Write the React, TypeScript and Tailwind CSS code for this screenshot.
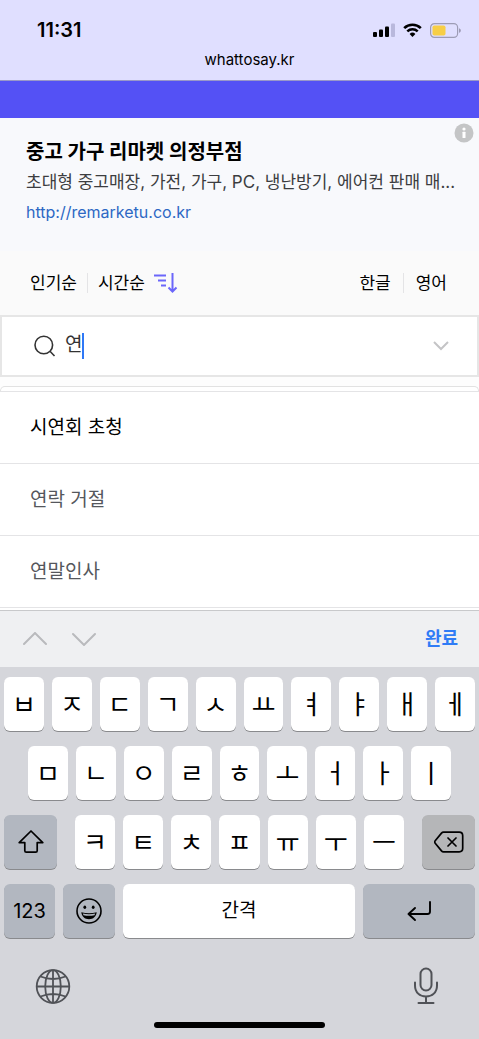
import { useState } from "react";
import type { ReactNode } from "react";
import clsx from "clsx";

const topRow = ["ㅂ", "ㅈ", "ㄷ", "ㄱ", "ㅅ", "ㅛ", "ㅕ", "ㅑ", "ㅐ", "ㅔ"];
const middleRow = ["ㅁ", "ㄴ", "ㅇ", "ㄹ", "ㅎ", "ㅗ", "ㅓ", "ㅏ", "ㅣ"];
const bottomRow = ["ㅋ", "ㅌ", "ㅊ", "ㅍ", "ㅠ", "ㅜ", "ㅡ"];

const suggestions = [
  { label: "시연회 초청", active: true },
  { label: "연락 거절", active: false },
  { label: "연말인사", active: false },
];

const keyTones = {
  light: "bg-white",
  dark: "bg-[#b2b7c0]",
  gray: "bg-[#b5b6b8]",
};

function StatusIcons() {
  return (
    <div className="flex items-center gap-2">
      <svg width="22" height="14" viewBox="0 0 22 14" aria-hidden="true">
        <rect x="0" y="9" width="4" height="5" rx="1" />
        <rect x="6" y="6.500" width="4" height="7.500" rx="1" />
        <rect x="12" y="3.500" width="4" height="10.500" rx="1" />
        <rect x="18" y="0.500" width="4" height="13.500" rx="1" fill="#b9b8dc" />
      </svg>
      <svg width="19" height="14" viewBox="0 0 19 14" aria-hidden="true">
        <path d="M1.200 5.100a12 12 0 0 1 16.600 0" fill="none" stroke="#000" strokeWidth="2.700" />
        <path d="M4.300 8.400a7.500 7.500 0 0 1 10.400 0" fill="none" stroke="#000" strokeWidth="2.500" />
        <path d="M6.600 10.900a4.300 4.300 0 0 1 5.800 0L9.500 14z" />
      </svg>
      <svg width="31" height="15" viewBox="0 0 31 15" aria-hidden="true">
        <rect x="0.600" y="0.600" width="27" height="13.800" rx="3.800" fill="none" stroke="#9d9cb5" strokeWidth="1.200" />
        <rect x="2.500" y="2.500" width="13" height="10" rx="1.800" fill="#f7ce46" />
        <path d="M29.200 5.200c2 .8 2 3.800 0 4.600z" fill="#8d8ca4" />
      </svg>
    </div>
  );
}

type KeyProps = {
  children: ReactNode;
  className?: string;
  tone?: keyof typeof keyTones;
  label?: string;
};

function Key({ children, className = "flex-1 text-[26px]", tone = "light", label }: KeyProps) {
  return (
    <button
      type="button"
      aria-label={label}
      className={clsx(
        "flex h-[54px] min-w-0 items-center justify-center rounded-md shadow-[0_1px_0_#898a8d]",
        keyTones[tone],
        className,
      )}
    >
      {children}
    </button>
  );
}

function Keyboard() {
  return (
    <section className="bg-[#d5d6db] pt-[10px]" aria-label="키보드">
      <div className="space-y-[15px] px-1">
        <div className="flex gap-2">
          {topRow.map((letter) => (
            <Key key={letter}>{letter}</Key>
          ))}
        </div>
        <div className="flex gap-2 px-6">
          {middleRow.map((letter) => (
            <Key key={letter}>{letter}</Key>
          ))}
        </div>
        <div className="flex justify-between gap-[18px]">
          <Key tone="dark" label="Shift" className="w-[53px]">
            <svg width="28" height="26" viewBox="0 0 28 26" fill="none" stroke="#000" strokeWidth="1.700" strokeLinejoin="round" aria-hidden="true">
              <path d="M14 2 2.200 13.600h5.600v8.100q0 1.500 1.500 1.500h9.400q1.500 0 1.500-1.500v-8.100h5.600z" />
            </svg>
          </Key>
          <div className="flex min-w-0 flex-1 gap-2">
            {bottomRow.map((letter) => (
              <Key key={letter}>{letter}</Key>
            ))}
          </div>
          <Key tone="gray" label="지우기" className="w-[53px]">
            <svg width="30" height="24" viewBox="0 0 30 24" fill="none" stroke="#000" strokeWidth="1.700" strokeLinecap="round" strokeLinejoin="round" aria-hidden="true">
              <path d="M9.500 2.200h15.700q3.500 0 3.500 3.500v12.600q0 3.500-3.500 3.500H9.500q-1.200 0-2-.9L1.200 13.200q-1-1.200 0-2.400l6.300-7.700q.8-.9 2-.9zM14 8l8 8M22 8l-8 8" />
            </svg>
          </Key>
        </div>
        <div className="flex gap-2">
          <Key tone="dark" className="w-[51px] text-xl">
            123
          </Key>
          <Key tone="dark" label="이모티콘" className="w-[52px]">
            <svg width="28" height="28" viewBox="0 0 28 28" aria-hidden="true">
              <circle cx="14" cy="14" r="12" fill="none" stroke="#000" strokeWidth="1.600" />
              <ellipse cx="9.800" cy="10.200" rx="1.400" ry="1.800" />
              <ellipse cx="18.200" cy="10.200" rx="1.400" ry="1.800" />
              <path d="M6.300 15.200q7.700 2 15.400 0c-.4 4.200-3.500 7-7.700 7s-7.300-2.800-7.700-7z" />
              <path d="M7.800 16.600q6.200 1.300 12.400 0l-.7 1.600q-5.500 1.300-11 0z" fill="#b2b7c0" />
            </svg>
          </Key>
          <Key className="flex-1 text-[19px]">간격</Key>
          <Key tone="dark" label="입력" className="w-[112px]">
            <svg width="26" height="22" viewBox="0 0 26 22" fill="none" stroke="#000" strokeWidth="1.900" strokeLinecap="round" strokeLinejoin="round" aria-hidden="true">
              <path d="M24 2v9.500q0 2.500-2.500 2.500H2.500M9 8l-6.500 6L9 20" />
            </svg>
          </Key>
        </div>
      </div>

      <div className="flex items-center justify-between pt-7 pr-8 pl-[35px] text-[#505257]">
        <button type="button" aria-label="언어 변경">
          <svg width="36" height="40" viewBox="0 0 36 40" fill="none" stroke="currentColor" strokeWidth="1.800" aria-hidden="true">
            <circle cx="18" cy="20.500" r="16.300" />
            <ellipse cx="18" cy="20.500" rx="7.800" ry="16.300" />
            <path d="M18 4v33M1.700 20.500h32.600M5.500 10.500q12.500 5 25 0M5.500 30.500q12.500-5 25 0" />
          </svg>
        </button>
        <button type="button" aria-label="받아쓰기">
          <svg width="42" height="40" viewBox="0 0 42 40" fill="none" stroke="currentColor" strokeWidth="2" strokeLinecap="round" aria-hidden="true">
            <rect x="15.500" y="2.500" width="11" height="22" rx="5.500" />
            <path d="M10 16.500v3c0 7 4.800 11 11 11s11-4 11-11v-3M21 30.500v6M13.500 37h15" />
          </svg>
        </button>
      </div>
      <div className="flex justify-center pt-4 pb-[11px]">
        <div className="h-[6px] w-[171px] rounded-full bg-black" />
      </div>
    </section>
  );
}

export default function App() {
  const [query, setQuery] = useState("연");

  return (
    <div className="min-h-screen w-full bg-[#d5d6db] font-['Inter','Noto_Sans_CJK_KR',sans-serif] text-black">
      <header className="border-b border-[#9998c9] bg-[#e0dfff]">
        <div className="flex h-[50px] items-center justify-between pt-[10px] pr-[18px] pl-[37px]">
          <time className="text-xl leading-6 font-semibold">11:31</time>
          <StatusIcons />
        </div>
        <p className="h-[30px] pl-5 text-center text-[15px] leading-5">whattosay.kr</p>
      </header>
      <div className="h-[37px] bg-[#5451f5]" />

      <main className="bg-white">
        <section className="relative h-[133px] bg-[#f8f9fc] pt-5 pr-4 pl-[26px]">
          <h1 className="text-xl leading-7 font-bold">중고 가구 리마켓 의정부점</h1>
          <p className="text-[17px] leading-8 whitespace-nowrap text-[#3c3d40]">
            초대형 중고매장, 가전, 가구, PC, 냉난방기, 에어컨 판매 매...
          </p>
          <a href="http://remarketu.co.kr" className="block text-base leading-7 text-[#2d68c4]">
            http://remarketu.co.kr
          </a>
          <button type="button" aria-label="광고 정보" className="absolute top-[5px] right-[5px]">
            <svg width="20" height="20" viewBox="0 0 20 20" aria-hidden="true">
              <circle cx="10" cy="10" r="9.500" fill="#c4c5c6" />
              <circle cx="10" cy="6" r="1.600" fill="#fff" />
              <rect x="8.500" y="8.700" width="3" height="6.300" rx="0.500" fill="#fff" />
            </svg>
          </button>
        </section>

        <div className="flex h-16 items-center justify-between bg-[#fafafa] pr-8 pl-[30px] text-[17px] leading-6">
          <div className="flex items-center">
            <button type="button" className="border-r border-[#e4e4e6] pr-[10px] leading-5">
              인기순
            </button>
            <button type="button" className="flex items-center gap-[9px] pl-[10px]">
              시간순
              <svg width="24" height="20" viewBox="0 0 24 20" fill="none" stroke="#6b66fa" strokeWidth="2" aria-hidden="true">
                <path d="M0 2.500h12M4 7.500h8M7 12.500h5" />
                <path d="M18.500 0v18.500M14.500 14.500l4 4 4-4" />
              </svg>
            </button>
          </div>
          <div className="flex items-center">
            <button type="button" className="border-r border-[#e4e4e6] pr-3 leading-5">
              한글
            </button>
            <button type="button" className="pl-3">
              영어
            </button>
          </div>
        </div>

        <div className="flex h-[62px] items-center border-2 border-[#e6e6e6] bg-white pr-7 pl-8">
          <svg width="22" height="22" viewBox="0 0 22 22" fill="none" stroke="#333" strokeWidth="1.600" aria-hidden="true">
            <circle cx="9.800" cy="10" r="8.800" />
            <path d="m16 16.300 4.500 4.700" />
          </svg>
          <div className="relative ml-[9px] h-[26px] flex-1">
            <input
              type="text"
              aria-label="검색"
              value={query}
              onChange={(event) => setQuery(event.target.value)}
              className="block h-6 w-full text-[19px] leading-6 text-[#333] caret-[#2f78f6] outline-none"
            />
            <span className="absolute top-0 left-[17px] h-[26px] w-[2px] bg-[#2f78f6]" />
          </div>
          <button type="button" aria-label="목록 펼치기">
            <svg width="16" height="10" viewBox="0 0 16 10" fill="none" stroke="#c4c4c6" strokeWidth="2" aria-hidden="true">
              <path d="m1 1 7 7 7-7" />
            </svg>
          </button>
        </div>

        <div className="h-[14px] bg-[#fdfdfd] pt-[9px]">
          <div className="h-[5px] rounded-t-md border border-b-0 border-[#e2e2e2] bg-white" />
        </div>
        <ul className="pb-[2px]">
          {suggestions.map((item) => (
            <li key={item.label} className="border-t border-[#e4e4e6] last:border-b">
              <button
                type="button"
                className={clsx("block h-[71px] w-full px-[30px] text-left text-[19px] leading-7", item.active ? "text-black" : "text-[#55575c]")}
              >
                {item.label}
              </button>
            </li>
          ))}
        </ul>
      </main>

      <div className="flex h-[57px] items-center justify-between border-t border-[#c8c9cb] bg-[#eff0f2] pr-[21px] pl-[23px]">
        <div className="flex gap-[25px]">
          <button type="button" aria-label="이전">
            <svg width="24" height="14" viewBox="0 0 24 14" fill="none" stroke="#b9babd" strokeWidth="2" strokeLinecap="round" aria-hidden="true">
              <path d="m1 12 11-11 11 11" />
            </svg>
          </button>
          <button type="button" aria-label="다음">
            <svg width="24" height="14" viewBox="0 0 24 14" fill="none" stroke="#b9babd" strokeWidth="2" strokeLinecap="round" aria-hidden="true">
              <path d="m1 2 11 11 11-11" />
            </svg>
          </button>
        </div>
        <button type="button" className="text-lg leading-6 font-bold text-[#2f7cf6]">
          완료
        </button>
      </div>
      <Keyboard />
    </div>
  );
}
